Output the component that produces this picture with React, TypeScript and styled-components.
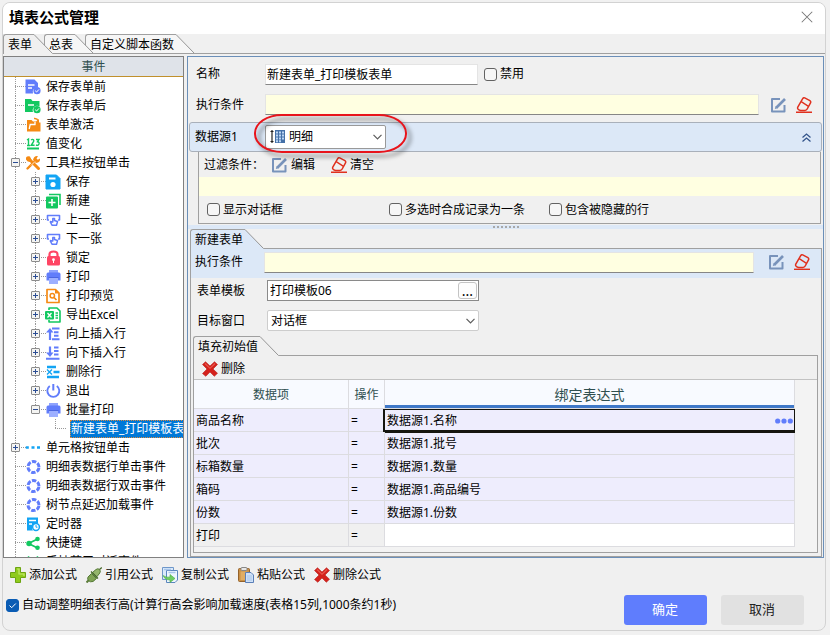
import React from 'react';
import styled, { createGlobalStyle } from 'styled-components';

const LINE = '#a0a0a0';
const PALE = '#dce8f7';
const FACE = '#f0f0f0';
const YELLOW = '#ffffe1';
const INDIGO = '#617dfb';
const GREEN = '#12c860';
const ORANGE = '#f58a14';
const SKY = '#12a4f4';

const GlobalStyle = createGlobalStyle`
  * { box-sizing: border-box; }
  body {
    margin: 0;
    background: #f1f1f1;
    color: #000;
    font: 12px/16px "Noto Sans", "Noto Sans CJK SC", sans-serif;
  }
  button, input, select { font: inherit; color: inherit; }
  svg { display: block; flex: none; }
`;

/* ---------- window ---------- */

const Page = styled.div`
  display: flex;
  height: 100vh;
  padding: 2px 4px 4px 2px;
`;

const Dialog = styled.main`
  flex: 1;
  min-width: 0;
  display: flex;
  flex-direction: column;
  overflow: hidden;
  background: ${FACE};
  border: 1px solid #d2d2d2;
  border-radius: 8px;
`;

const TitleBar = styled.header`
  display: flex;
  align-items: center;
  justify-content: space-between;
  height: 31px;
  padding: 0 12px 3px 6px;
  background: #fff;
`;

const Title = styled.h1`
  margin: 0;
  font-size: 15px;
  line-height: 20px;
  font-weight: 700;
`;

const PlainButton = styled.button`
  display: flex;
  align-items: center;
  gap: 3px;
  padding: 0;
  border: 0;
  background: none;
  white-space: nowrap;
`;

const Workspace = styled.div`
  flex: 1;
  min-height: 0;
  display: grid;
  grid-template: minmax(0, 1fr) / 181px minmax(0, 1fr);
  gap: 3px;
  padding: 2px 1px 0 0;
`;

/* ---------- slanted tabs ---------- */

const TabStrip = styled.div`
  display: flex;
  isolation: isolate;
  height: 20px;
  box-shadow: inset 0 -1px ${LINE};
`;

const TabButton = styled.button<{ $order: number }>`
  position: relative;
  z-index: ${p => 9 - p.$order};
  display: flex;
  padding: 0;
  margin-left: ${p => (p.$order ? '-9px' : '0')};
  border: 0;
  background: none;
  white-space: nowrap;
`;

const TabFace = styled.span<{ $active: boolean; $fill: string }>`
  height: ${p => (p.$active ? 20 : 19)}px;
  padding: 2px 2px 0 4px;
  border: solid ${LINE};
  border-width: 1px 0 0 1px;
  border-top-left-radius: 3px;
  background: ${p => p.$fill};
`;

function Tab({ label, order = 0, active = false, fill = FACE }: { label: string; order?: number; active?: boolean; fill?: string }) {
  const h = active ? 20 : 19;
  return (
    <TabButton role="tab" aria-selected={active} $order={order}>
      <TabFace $active={active} $fill={fill}>{label}</TabFace>
      <svg width="19" height={h} viewBox={`0 0 19 ${h}`}>
        <path d={`M0 0.5L${h - 1} ${h}H0Z`} fill={fill} />
        <path d="M0 0.5L18.5 19.5" fill="none" stroke="#959595" />
      </svg>
    </TabButton>
  );
}

/* ---------- icons ---------- */

const Svg = ({ children, size = 16 }: { children: React.ReactNode; size?: number }) => (
  <svg width={size} height={size} viewBox="0 0 16 16" fill="none" aria-hidden="true">{children}</svg>
);

const CloseIcon = () => <Svg size={12}><path d="M1 1L15 15M15 1L1 15" stroke="#777" strokeWidth="1.4" /></Svg>;

const EditIcon = () => (
  <Svg>
    <path d="M9 2H1V14.500H13.500V8" stroke="#7893bb" strokeWidth="2" strokeLinejoin="round" />
    <path d="M5.500 10.500L14 2" stroke="#7893bb" strokeWidth="2.600" />
    <path d="M3.800 12L4.600 9L7 11.300Z" fill="#7893bb" />
  </Svg>
);

const EraserIcon = () => (
  <Svg>
    <path d="M8.700 0.900L13.900 3.600Q15.200 4.500 14.500 5.800L11.200 12Q10.500 13.400 8.800 13.400H4.500Q0.800 12.500 1.800 10L6.700 1.600Q7.500 0.400 8.700 0.900Z" stroke="#e0301e" strokeWidth="1.500" />
    <path d="M5.200 4.700L12.500 9.300" stroke="#e0301e" strokeWidth="1.400" />
    <path d="M0 15.300H16" stroke="#e0301e" strokeWidth="1.400" />
  </Svg>
);

const RedCrossIcon = () => (
  <Svg>
    <path d="M3.500 0.800L8 5L12.500 0.800L15.500 3.500L11 8L15.500 12.300L12.300 15.300L8 11L3.800 15.300L0.500 12.500L5 8L0.500 3.500Z" fill="#d4211b" stroke="#b9201c" strokeWidth="0.600" strokeLinejoin="round" />
    <path d="M3.500 2L8 6.400L12.500 2L13.500 3L8 8L2.500 3Z" fill="#e8544c" />
  </Svg>
);

const PlusIcon = () => (
  <Svg>
    <path d="M5.500 0.500H10.500V5.500H15.500V10.500H10.500V15.500H5.500V10.500H0.500V5.500H5.500Z" fill="#8fcb1c" stroke="#6da512" />
    <path d="M7 2H9V7H14V9" stroke="#c5e96e" strokeWidth="1.200" />
  </Svg>
);

const PlugIcon = () => (
  <Svg>
    <path d="M0.500 15.500L3.500 12.500" stroke="#5b7b3a" strokeWidth="2" />
    <path d="M2 10L5.500 6.500L10.500 11.500L7 14.500Q4 15.500 2.500 13.500Q1 12 2 10Z" fill="#7fa355" stroke="#557a36" />
    <path d="M6.500 5.500L10 2.500Q12 1 13.500 2.500Q15 4 13.800 6L10.800 9.800Z" fill="#94b56c" stroke="#557a36" />
    <path d="M13.500 2.500L15.800 0.500M5 4.500L12 11.500" stroke="#47692b" strokeWidth="1.300" />
  </Svg>
);

const CopyIcon = () => (
  <Svg>
    <path d="M0.500 0.500H11.500V12.500H0.500Z" fill="#d9e9fb" stroke="#6f97c9" />
    <path d="M4.500 3.500H15.500V13L13 15.500H4.500Z" fill="#eef6ff" stroke="#5b86be" />
    <path d="M6.500 5.500H13.500M2 2.500H9" stroke="#a9c6ea" strokeWidth="1.500" />
    <path d="M1 8.500Q4 11 8 10V7.500L13 11.500L8 15.500V13Q3 13 1 8.500Z" fill="#6fce62" stroke="#4fae48" strokeWidth="0.600" />
  </Svg>
);

const PasteIcon = () => (
  <Svg>
    <rect x="0.500" y="1.500" width="11" height="13" rx="1" fill="#c98f45" stroke="#94622a" />
    <rect x="3" y="0.500" width="6" height="3" rx="1" fill="#e6e6e6" stroke="#888" />
    <path d="M2.500 4.500H9.500V13H2.500Z" fill="#e0ad63" />
    <path d="M7.500 5.500H13L15.500 8V15.500H7.500Z" fill="#cfe1f7" stroke="#5a7fb8" />
    <path d="M9 9H14M9 11H14M9 13H14" stroke="#a9c7ec" />
  </Svg>
);

const DetailIcon = () => (
  <Svg>
    <path d="M2 1V14M0.500 2.500H3.500M0.500 12.500H3.500" stroke="#222" strokeWidth="1.200" />
    <rect x="5" y="1" width="10" height="13" fill="#4470a8" />
    <path d="M6 3.500H8M9 3.500H11M12 3.500H14M6 6.500H8M9 6.500H11M12 6.500H14M6 9.500H8M9 9.500H11M12 9.500H14M6 12.300H8M9 12.300H11" stroke="#bdd7f5" strokeWidth="2" />
  </Svg>
);

const Chevron = () => (
  <svg width="9" height="6" viewBox="0 0 9 6" fill="none" aria-hidden="true"><path d="M0.500 0.800L4.500 4.800L8.500 0.800" stroke="#5c5c5c" strokeWidth="1.200" /></svg>
);

const CollapseIcon = () => (
  <svg width="9" height="9" viewBox="0 0 9 9" fill="none" aria-hidden="true"><path d="M0.500 4.500L4.500 1L8.500 4.500M0.500 8.500L4.500 5L8.500 8.500" stroke="#34558b" strokeWidth="1.300" /></svg>
);

const MoreDots = () => (
  <svg width="18" height="6" viewBox="0 0 18 6" fill={INDIGO} aria-hidden="true"><circle cx="2.700" cy="3" r="2.600" /><circle cx="9" cy="3" r="2.600" /><circle cx="15.300" cy="3" r="2.600" /></svg>
);

const treeIcons: Record<string, React.ReactNode> = {
  docCheck: (
    <>
      <path d="M0.500 0.500H9.500L13 4V8.500A4.500 4.500 0 0 0 8 14.500H0.500Z" fill={INDIGO} />
      <path d="M3 6H9.500M3 9H7" stroke="#fff" strokeWidth="1.300" />
      <circle cx="12" cy="11.700" r="3.600" fill={INDIGO} />
      <path d="M10.200 11.700L11.600 13L14 10.400" stroke="#fff" />
    </>
  ),
  folderCheck: (
    <>
      <path d="M0 1H6L7.500 3H14.500V8.500A4.500 4.500 0 0 0 8 14H0Z" fill={GREEN} />
      <path d="M3 7H9" stroke="#fff" strokeWidth="1.300" />
      <circle cx="12" cy="11.700" r="3.600" fill={GREEN} />
      <path d="M10.200 11.700L11.600 13L14 10.400" stroke="#fff" />
    </>
  ),
  folderOpen: (
    <>
      <path d="M2 3H6.500L8 4.500H11L14 2V5.500H15.500V14.500H2Z" fill={ORANGE} />
      <path d="M4.200 12L5.200 7.500H10.500M10 5V8" stroke="#fff" strokeWidth="1.300" />
      <path d="M9 1.500Q12 1 13.500 4" stroke={ORANGE} strokeWidth="1.500" />
    </>
  ),
  numbers: (
    <>
      <path d="M2 4L3.500 3V9.500M2 9.500H5M6.200 4.200Q7 3 8.200 3.600Q9.500 4.500 8 6.500L6.200 9.300H9.600M11 3.500H14L12.500 5.700Q14.500 6 14 8Q13.200 10 11 9" stroke={GREEN} strokeWidth="1.400" />
      <path d="M2 12.500H14" stroke={GREEN} strokeWidth="1.800" />
    </>
  ),
  tools: (
    <>
      <path d="M4 4L13.500 13.500" stroke={ORANGE} strokeWidth="3" strokeLinecap="round" />
      <path d="M1 4.500Q0.500 0.500 5 1.500L6.500 5L4.500 7Q2 6.500 1 4.500Z" fill={ORANGE} />
      <path d="M2.500 13.500L9 7" stroke={ORANGE} strokeWidth="2.400" strokeLinecap="round" />
      <path d="M8 5Q9 0.500 13 1.200L11.500 3.500L12.800 4.800L15 3.500Q15.500 7.500 11 8Z" fill={ORANGE} />
      <path d="M6 10.500L10 6.500" stroke="#fff" strokeWidth="0.800" />
    </>
  ),
  save: (
    <>
      <path d="M1 1H11.500L15 4.500V15H1Z" fill={SKY} stroke={SKY} strokeLinejoin="round" />
      <path d="M4 4.500H10.500" stroke="#fff" strokeWidth="2" />
      <circle cx="8" cy="10.500" r="2.600" fill="#fff" />
    </>
  ),
  add: (
    <>
      <path d="M4 1.500H15V12" stroke={GREEN} strokeWidth="1.600" />
      <rect x="1" y="3.500" width="12" height="12" rx="1" fill={GREEN} />
      <path d="M7 6V13M3.500 9.500H10.500" stroke="#fff" strokeWidth="1.600" />
    </>
  ),
  hand: (
    <>
      <path d="M4 8H2.500V3.500H14.500V8H13" stroke={INDIGO} strokeWidth="1.600" strokeLinejoin="round" />
      <path d="M5 9.500L7 13.200H11.500L12.500 9.500L9.500 8.500V6.500H7.800V10L5 9.500" stroke={INDIGO} strokeWidth="1.500" strokeLinejoin="round" />
    </>
  ),
  lock: (
    <>
      <path d="M4.500 8V4.500Q4.500 1.500 8.500 1.500T12.500 4.500V8" stroke="#ff4564" strokeWidth="2.200" />
      <rect x="2" y="6" width="13" height="9.500" rx="1.500" fill="#ff4564" />
      <circle cx="8.500" cy="9.700" r="1.400" fill="#fff" />
      <path d="M8.500 10V13" stroke="#fff" />
    </>
  ),
  printer: (
    <>
      <path d="M4 1H13V4H4Z" fill="#8fa3fd" />
      <path d="M3 3.500H14Q15.500 3.500 15.500 5.500V11.500H1.500V5.500Q1.500 3.500 3 3.500Z" fill={INDIGO} />
      <path d="M4 9H13V15H4Z" fill="#9dafff" />
      <path d="M3.500 8.500H13.500" stroke="#4c66e0" />
    </>
  ),
  preview: (
    <>
      <path d="M2 1.500H10.500L14 5V14.500H2Z" stroke={ORANGE} strokeWidth="1.700" strokeLinejoin="round" />
      <path d="M10 1V5.500H14Z" fill={ORANGE} />
      <circle cx="7.300" cy="7.800" r="2.200" stroke={ORANGE} strokeWidth="1.500" />
      <path d="M9 9.500L11.500 12" stroke={ORANGE} strokeWidth="1.700" />
    </>
  ),
  excel: (
    <>
      <path d="M4 3V1H12L15 4V15H4V13" stroke={GREEN} strokeWidth="1.600" strokeLinejoin="round" />
      <rect x="0" y="4" width="9" height="8.500" rx="1" fill={GREEN} />
      <path d="M2.500 6L6.500 10.500M6.500 6L2.500 10.500" stroke="#fff" strokeWidth="1.300" />
      <path d="M10.500 6H13M10.500 8.500H13M10.500 11H13" stroke={GREEN} strokeWidth="1.400" />
    </>
  ),
  insertUp: (
    <>
      <path d="M5 14V4" stroke={INDIGO} strokeWidth="2.200" />
      <path d="M1 6.500L5 2L8.500 6.500Z" fill={INDIGO} />
      <path d="M7 2.500H14.500M9 6.200H13.500M9 9.800H13.500M7 13.300H14.500" stroke={INDIGO} strokeWidth="2" />
    </>
  ),
  insertDown: (
    <>
      <path d="M5 1.500V10" stroke={INDIGO} strokeWidth="2.200" />
      <path d="M1 7.500L5 12L8.500 7.500Z" fill={INDIGO} />
      <path d="M9 2.500H13.500M9 6H13.500M9 9.500H13.500M1 13.800H14.500" stroke={INDIGO} strokeWidth="2" />
    </>
  ),
  deleteRow: (
    <>
      <path d="M2 3H11M2 13H14M8.500 8H14.500" stroke={SKY} strokeWidth="2.600" />
      <path d="M2 5.500L7 10.500M7 5.500L2 10.500" stroke={SKY} strokeWidth="1.400" />
    </>
  ),
  power: (
    <>
      <path d="M4.800 3A6 6 0 1 0 11.800 3" stroke={INDIGO} strokeWidth="1.900" />
      <path d="M8.300 1V7.500" stroke={INDIGO} strokeWidth="2" />
    </>
  ),
  dots: <path d="M0.800 7.500H3.800M6.500 7.500H9.500M12 7.500H15" stroke={SKY} strokeWidth="2.600" />,
  ring: <circle cx="8.500" cy="8" r="5.500" stroke={INDIGO} strokeWidth="3" strokeDasharray="4.400 1.360" strokeDashoffset="-0.600" />,
  timer: (
    <>
      <path d="M2 1.500H13V7.500A4.500 4.500 0 0 0 8 14.500H2Z" fill={SKY} />
      <path d="M4 4.500H11M4 8H7" stroke="#fff" strokeWidth="1.400" />
      <circle cx="11" cy="11" r="3.400" stroke={SKY} strokeWidth="1.500" />
      <path d="M11 9V11.200H12.500" stroke={SKY} />
    </>
  ),
  share: (
    <>
      <path d="M12.500 4L3.500 8.500L12.500 13" stroke={GREEN} strokeWidth="1.700" />
      <circle cx="12.500" cy="4" r="2.300" fill={GREEN} /><circle cx="4" cy="8.500" r="2.700" fill={GREEN} /><circle cx="12.500" cy="12.800" r="2.300" fill={GREEN} />
    </>
  ),
  barcode: <path d="M3 2.500L6 6.500M13 2.500L10 6.500M8 7V14" stroke={GREEN} strokeWidth="2" />,
};

/* ---------- event tree ---------- */

const TreePanel = styled.nav`
  overflow: hidden;
  border: 1px solid #808080;
  background: #fff;
`;

const TreeHeader = styled.div`
  height: 20px;
  line-height: 20px;
  text-align: center;
  color: #2f4f4f;
  background: #dfe3e9;
  border-bottom: 1px solid #c0902c;
`;

const TreeList = styled.ul`
  margin: 0;
  padding: 0 0 0 1px;
  list-style: none;
`;

const TreeRow = styled.li`
  display: flex;
  align-items: center;
  height: 19px;
  white-space: nowrap;
`;

type Line = 'none' | 'pass' | 'branch' | 'end';

const Guide = styled.span<{ $line: Line }>`
  flex: none;
  display: flex;
  align-items: center;
  justify-content: center;
  width: 21px;
  margin-right: -1px;
  height: 19px;
  background-repeat: no-repeat;
  background-image: ${p => (p.$line === 'none' ? 'none' : 'repeating-linear-gradient(180deg, #999 0 1px, transparent 1px 2px)')}
    ${p => (p.$line === 'branch' || p.$line === 'end' ? ', repeating-linear-gradient(90deg, #999 0 1px, transparent 1px 2px)' : '')};
  background-position: 10px 0, 10px 9px;
  background-size: 1px ${p => (p.$line === 'end' ? '10px' : '100%')}, 11px 1px;
`;

const Expander = styled.button`
  display: grid;
  place-items: center;
  width: 9px;
  height: 9px;
  padding: 0;
  border: 1px solid #8c8c8c;
  border-radius: 1px;
  background: #f4f4f2;
`;

const TreeIcon = styled.span`
  width: 20px;
`;

const TreeLabel = styled.span<{ $selected: boolean }>`
  flex: 1;
  height: 18px;
  line-height: 18px;
  padding-left: 1px;
  ${p => p.$selected && `
    margin-left: 5px;
    color: #fff;
    background: #0078d7;
    outline: 1px dotted #e08a3c;
    outline-offset: -1px;
  `}
`;

type Node = { label: string; icon?: string; lines: Line[]; open?: boolean; selected?: boolean };
const top = (icon: string, label: string, open?: boolean): Node => ({ label, icon, lines: ['branch'], open });
const sub = (icon: string, label: string): Node => ({ label, icon, lines: ['pass', 'branch'], open: false });

const nodes: Node[] = [
  top('docCheck', '保存表单前'),
  top('folderCheck', '保存表单后'),
  top('folderOpen', '表单激活'),
  top('numbers', '值变化'),
  top('tools', '工具栏按钮单击', true),
  sub('save', '保存'),
  sub('add', '新建'),
  sub('hand', '上一张'),
  sub('hand', '下一张'),
  sub('lock', '锁定'),
  sub('printer', '打印'),
  sub('preview', '打印预览'),
  sub('excel', '导出Excel'),
  sub('insertUp', '向上插入行'),
  sub('insertDown', '向下插入行'),
  sub('deleteRow', '删除行'),
  sub('power', '退出'),
  { icon: 'printer', label: '批量打印', lines: ['pass', 'end'], open: true },
  { label: '新建表单_打印模板表单', lines: ['pass', 'none', 'end'], selected: true },
  top('dots', '单元格按钮单击', false),
  top('ring', '明细表数据行单击事件'),
  top('ring', '明细表数据行双击事件'),
  top('ring', '树节点延迟加载事件'),
  top('timer', '定时器'),
  top('share', '快捷键'),
  top('barcode', '手持蓝牙对话事件'),
];

function EventTree() {
  return (
    <TreePanel aria-label="事件">
      <TreeHeader>事件</TreeHeader>
      <TreeList>
        {nodes.map((n, i) => (
          <TreeRow key={i}>
            {n.lines.map((line, level) => (
              <Guide key={level} $line={line}>
                {level === n.lines.length - 1 && n.open !== undefined && (
                  <Expander aria-label={n.label} aria-expanded={n.open}>
                    <svg width="5" height="5" viewBox="0 0 5 5"><path d={n.open ? 'M0 2.500H5' : 'M0 2.500H5M2.500 0V5'} stroke="#2b4d94" /></svg>
                  </Expander>
                )}
              </Guide>
            ))}
            {n.icon && <TreeIcon><Svg>{treeIcons[n.icon]}</Svg></TreeIcon>}
            <TreeLabel $selected={!!n.selected}>{n.label}</TreeLabel>
          </TreeRow>
        ))}
      </TreeList>
    </TreePanel>
  );
}

/* ---------- form parts ---------- */

const Editor = styled.section`
  display: flex;
  flex-direction: column;
  min-width: 0;
  overflow: hidden;
  border: 1px solid #6b8fb8;
`;

const Caption = styled.label<{ $narrow?: boolean }>`
  flex: none;
  width: ${p => (p.$narrow ? 69 : 70)}px;
`;

const FormRow = styled.div<{ $height?: number }>`
  display: flex;
  align-items: center;
  height: ${p => p.$height ?? 30}px;
`;

const General = styled.div`
  padding: 2px 11px 2px 8px;
`;

const TextField = styled.input`
  width: 213px;
  height: 21px;
  padding: 0 1px;
  border: 1px solid #e4e4e4;
  border-bottom-color: #868686;
  background: #fff;
  outline: 0;
`;

const FormulaField = styled(TextField)`
  flex: 1;
  min-width: 0;
  background: ${YELLOW};
`;

const FieldActions = styled.div<{ $gap: number }>`
  display: flex;
  gap: 9px;
  margin-left: ${p => p.$gap}px;
`;

const CheckLabel = styled.label`
  display: flex;
  align-items: center;
  gap: 3px;
  white-space: nowrap;
`;

const CheckBox = styled.input`
  appearance: none;
  flex: none;
  width: 13px;
  height: 13px;
  margin: 0;
  border: 1px solid #626262;
  border-radius: 3px;
  background: #f6f6f6;
  &:checked {
    border-color: #0a5cb4;
    background: #0a5cb4 url("data:image/svg+xml,%3Csvg xmlns='http://www.w3.org/2000/svg' viewBox='0 0 11 11'%3E%3Cpath d='M2.500 5.500L4.700 7.700L8.800 3.500' fill='none' stroke='white'/%3E%3C/svg%3E");
  }
`;

const NameSide = styled.div`
  margin-left: 6px;
`;

const SourceHeader = styled.div`
  display: flex;
  align-items: center;
  height: 30px;
  margin: 0 1px;
  padding: 0 10px 0 5px;
  border: 1px solid #a9b0ba;
  border-radius: 3px;
  background: ${PALE};
`;

const Combo = styled.div<{ $width: number }>`
  display: grid;
  align-items: center;
  width: ${p => p.$width}px;
  > * { grid-area: 1 / 1; }
  > svg { pointer-events: none; }
  > svg:last-of-type { justify-self: end; margin-right: 4px; }
  > svg:first-of-type:not(:last-of-type) { margin-left: 5px; }
`;

const SelectBox = styled.select<{ $icon?: boolean }>`
  appearance: none;
  width: 100%;
  height: ${p => (p.$icon ? 24 : 21)}px;
  padding: 0 16px 0 ${p => (p.$icon ? 23 : 3)}px;
  border: 1px solid ${p => (p.$icon ? '#999' : '#cdcdcd')};
  border-radius: 2px;
  background: #fff;
  outline: 0;
`;

const MarkedField = styled.div`
  position: relative;
`;

const RedMark = styled.div`
  position: absolute;
  left: -11px;
  top: -11px;
  width: 153px;
  height: 39px;
  border: 2px solid #e8141b;
  border-radius: 28px / 19px;
  filter: drop-shadow(4px 4px 2px rgba(0, 0, 0, 0.5));
  pointer-events: none;
`;

const HeaderEnd = styled.div`
  margin-left: auto;
`;

const SourceBody = styled.div`
  margin: 0 2px 0 10px;
  border: solid ${LINE};
  border-width: 0 1px 1px;
`;

const FilterRow = styled.div`
  display: flex;
  align-items: center;
  height: 25px;
  padding-left: 5px;
  gap: 16px;
`;

const FilterCaption = styled.span`
  width: 52px;
  white-space: nowrap;
`;

const FilterInput = styled.input`
  display: block;
  width: 100%;
  height: 19px;
  padding: 0 3px;
  border: 0;
  background: ${YELLOW};
`;

const OptionRow = styled.div`
  display: grid;
  grid-template-columns: 182px 160px auto;
  justify-content: start;
  align-items: center;
  height: 27px;
  padding-left: 8px;
`;

const Splitter = styled.div`
  display: flex;
  justify-content: center;
  align-items: center;
  gap: 2px;
  height: 4px;
  margin-top: 1px;
  background: ${PALE};
`;

const Grip = styled.i`
  width: 2px;
  height: 2px;
  background: #a8a8a8;
`;

/* ---------- tab pages ---------- */

const Notebook = styled.div<{ $inner?: boolean }>`
  flex: 1;
  min-height: 0;
  display: flex;
  flex-direction: column;
  margin: ${p => (p.$inner ? '3px 3px 3px 2px' : '0 1px 0 2px')};
`;

const TabPage = styled.div`
  flex: 1;
  min-height: 0;
  display: flex;
  flex-direction: column;
  border: solid ${LINE};
  border-width: 0 1px 1px;
`;

const ConditionRow = styled(FormRow)`
  height: 29px;
  padding: 0 11px 3px 4px;
  background: ${PALE};
`;

const TemplateForm = styled.div`
  display: grid;
  gap: 5px;
  padding-left: 6px;
`;

const Picker = styled.div`
  display: flex;
  align-items: center;
  width: 212px;
  height: 21px;
  padding-right: 1px;
  border: 1px solid #8a8a8a;
  background: #fff;
`;

const PickerInput = styled.input`
  flex: 1;
  min-width: 0;
  padding: 0 2px;
  border: 0;
  background: none;
  outline: 0;
`;

const PickerButton = styled.button`
  width: 19px;
  height: 17px;
  padding: 0;
  border: 1px solid #c4c4c4;
  border-radius: 3px;
  background: #fdfdfd;
  font-size: 14px;
  line-height: 13px;
`;

const GridToolbar = styled.div`
  display: flex;
  align-items: center;
  height: 24px;
  padding: 2px 0 0 8px;
  border-bottom: 1px solid #c2c2c2;
`;

const GridArea = styled.div`
  flex: 1;
  padding-right: 22px;
  background: #f3f3f3;
`;

const DataGrid = styled.table`
  width: 100%;
  table-layout: fixed;
  border-spacing: 0;
`;

const HeadCell = styled.th<{ $width?: number; $current?: boolean }>`
  width: ${p => (p.$width ? `${p.$width}px` : 'auto')};
  height: 29px;
  padding: 2px 0 0;
  font-weight: 400;
  font-size: ${p => (p.$current ? 14 : 12)}px;
  color: #2f4f4f;
  background: #f8faff;
  border: solid #dcdce0;
  border-width: 0 1px 1px 0;
  ${p => p.$current && 'box-shadow: inset 0 -3px #3f78c8;'}
`;

const Cell = styled.td<{ $fill: string; $current?: boolean }>`
  height: 23px;
  padding: 2px 2px 0;
  background: ${p => p.$fill};
  border: solid #dcdce0;
  border-width: 0 1px 1px 0;
  ${p => p.$current && `
    position: relative;
    padding-right: 1px;
    border-color: #15150f;
    box-shadow: -2px 0 #15150f, 0 1px #15150f, inset 0 1px #15150f, inset 0 -1px #15150f;
  `}
`;

const CellContent = styled.div`
  display: flex;
  align-items: center;
  justify-content: space-between;
`;

/* ---------- footer ---------- */

const Footer = styled.footer`
  height: 72px;
`;

const FormulaToolbar = styled.div`
  display: flex;
  align-items: center;
  gap: 9px;
  height: 34px;
  padding-left: 7px;
`;

const FooterRow = styled.div`
  display: flex;
  justify-content: space-between;
  align-items: flex-start;
  padding: 3px 21px 0 3px;
`;

const AutoHeight = styled.div`
  padding-top: 2px;
`;

const DialogActions = styled.div`
  display: flex;
  gap: 14px;
`;

const ActionButton = styled.button<{ $primary?: boolean }>`
  width: 83px;
  height: 30px;
  padding: 0 1px 2px 0;
  border: 0;
  border-radius: 3px;
  font-size: 13px;
  color: ${p => (p.$primary ? '#fff' : '#222')};
  background: ${p => (p.$primary ? '#5f7dfd' : '#e1e1e1')};
`;

const rows = [
  ['商品名称', '数据源1.名称'],
  ['批次', '数据源1.批号'],
  ['标箱数量', '数据源1.数量'],
  ['箱码', '数据源1.商品编号'],
  ['份数', '数据源1.份数'],
  ['打印', ''],
];

const tools: [React.ReactNode, string][] = [
  [<PlusIcon />, '添加公式'],
  [<PlugIcon />, '引用公式'],
  [<CopyIcon />, '复制公式'],
  [<PasteIcon />, '粘贴公式'],
  [<RedCrossIcon />, '删除公式'],
];

const ConditionActions = ({ gap }: { gap: number }) => (
  <FieldActions $gap={gap}>
    <PlainButton aria-label="编辑"><EditIcon /></PlainButton>
    <PlainButton aria-label="清空"><EraserIcon /></PlainButton>
  </FieldActions>
);

const Check = ({ label, checked }: { label: string; checked?: boolean }) => (
  <CheckLabel><CheckBox type="checkbox" defaultChecked={checked} />{label}</CheckLabel>
);

export default function App() {
  return (
    <Page>
      <GlobalStyle />
      <Dialog>
        <TitleBar>
          <Title>填表公式管理</Title>
          <PlainButton aria-label="关闭"><CloseIcon /></PlainButton>
        </TitleBar>
        <TabStrip role="tablist">
          <Tab label="表单" active />
          <Tab label="总表" order={1} fill="#f6f6f6" />
          <Tab label="自定义脚本函数" order={2} fill="#f6f6f6" />
        </TabStrip>
        <Workspace>
          <EventTree />
          <Editor>
            <General>
              <FormRow>
                <Caption htmlFor="name" $narrow>名称</Caption>
                <TextField id="name" defaultValue="新建表单_打印模板表单" />
                <NameSide><Check label="禁用" /></NameSide>
              </FormRow>
              <FormRow $height={31}>
                <Caption htmlFor="condition" $narrow>执行条件</Caption>
                <FormulaField id="condition" />
                <ConditionActions gap={12} />
              </FormRow>
            </General>
            <SourceHeader>
              <Caption htmlFor="source">数据源1</Caption>
              <MarkedField>
                <Combo $width={121}>
                  <SelectBox id="source" $icon><option>明细</option></SelectBox>
                  <DetailIcon />
                  <Chevron />
                </Combo>
                <RedMark />
              </MarkedField>
              <HeaderEnd><PlainButton aria-label="收起"><CollapseIcon /></PlainButton></HeaderEnd>
            </SourceHeader>
            <SourceBody>
              <FilterRow>
                <FilterCaption>过滤条件：</FilterCaption>
                <PlainButton><EditIcon />编辑</PlainButton>
                <PlainButton><EraserIcon />清空</PlainButton>
              </FilterRow>
              <FilterInput aria-label="过滤条件" />
              <OptionRow>
                <Check label="显示对话框" />
                <Check label="多选时合成记录为一条" />
                <Check label="包含被隐藏的行" />
              </OptionRow>
            </SourceBody>
            <Splitter>{[0, 1, 2, 3, 4, 5, 6].map(i => <Grip key={i} />)}</Splitter>
            <Notebook>
              <TabStrip role="tablist"><Tab label="新建表单" active fill={PALE} /></TabStrip>
              <TabPage>
                <ConditionRow>
                  <Caption htmlFor="formCondition" $narrow>执行条件</Caption>
                  <FormulaField id="formCondition" />
                  <ConditionActions gap={15} />
                </ConditionRow>
                <TemplateForm>
                  <FormRow $height={25}>
                    <Caption htmlFor="template">表单模板</Caption>
                    <Picker>
                      <PickerInput id="template" defaultValue="打印模板06" />
                      <PickerButton aria-label="选择模板">...</PickerButton>
                    </Picker>
                  </FormRow>
                  <FormRow $height={25}>
                    <Caption htmlFor="target">目标窗口</Caption>
                    <Combo $width={212}>
                      <SelectBox id="target"><option>对话框</option></SelectBox>
                      <Chevron />
                    </Combo>
                  </FormRow>
                </TemplateForm>
                <Notebook $inner>
                  <TabStrip role="tablist"><Tab label="填充初始值" active /></TabStrip>
                  <TabPage>
                    <GridToolbar><PlainButton><RedCrossIcon />删除</PlainButton></GridToolbar>
                    <GridArea>
                      <DataGrid>
                        <thead>
                          <tr>
                            <HeadCell $width={155}>数据项</HeadCell>
                            <HeadCell $width={36}>操作</HeadCell>
                            <HeadCell $current>绑定表达式</HeadCell>
                          </tr>
                        </thead>
                        <tbody>
                          {rows.map(([item, expr], i) => (
                            <tr key={item}>
                              <Cell $fill={expr ? '#eeedfd' : FACE}>{item}</Cell>
                              <Cell $fill={expr ? '#eeedfd' : FACE}>=</Cell>
                              <Cell $fill={expr ? '#eeedfd' : '#fff'} $current={i === 0}>
                                <CellContent>
                                  {expr}
                                  {i === 0 && <PlainButton aria-label="编辑表达式"><MoreDots /></PlainButton>}
                                </CellContent>
                              </Cell>
                            </tr>
                          ))}
                        </tbody>
                      </DataGrid>
                    </GridArea>
                  </TabPage>
                </Notebook>
              </TabPage>
            </Notebook>
          </Editor>
        </Workspace>
        <Footer>
          <FormulaToolbar>
            {tools.map(([icon, label]) => <PlainButton key={label}>{icon}{label}</PlainButton>)}
          </FormulaToolbar>
          <FooterRow>
            <AutoHeight><Check label="自动调整明细表行高(计算行高会影响加载速度(表格15列,1000条约1秒)" checked /></AutoHeight>
            <DialogActions>
              <ActionButton $primary>确定</ActionButton>
              <ActionButton>取消</ActionButton>
            </DialogActions>
          </FooterRow>
        </Footer>
      </Dialog>
    </Page>
  );
}
